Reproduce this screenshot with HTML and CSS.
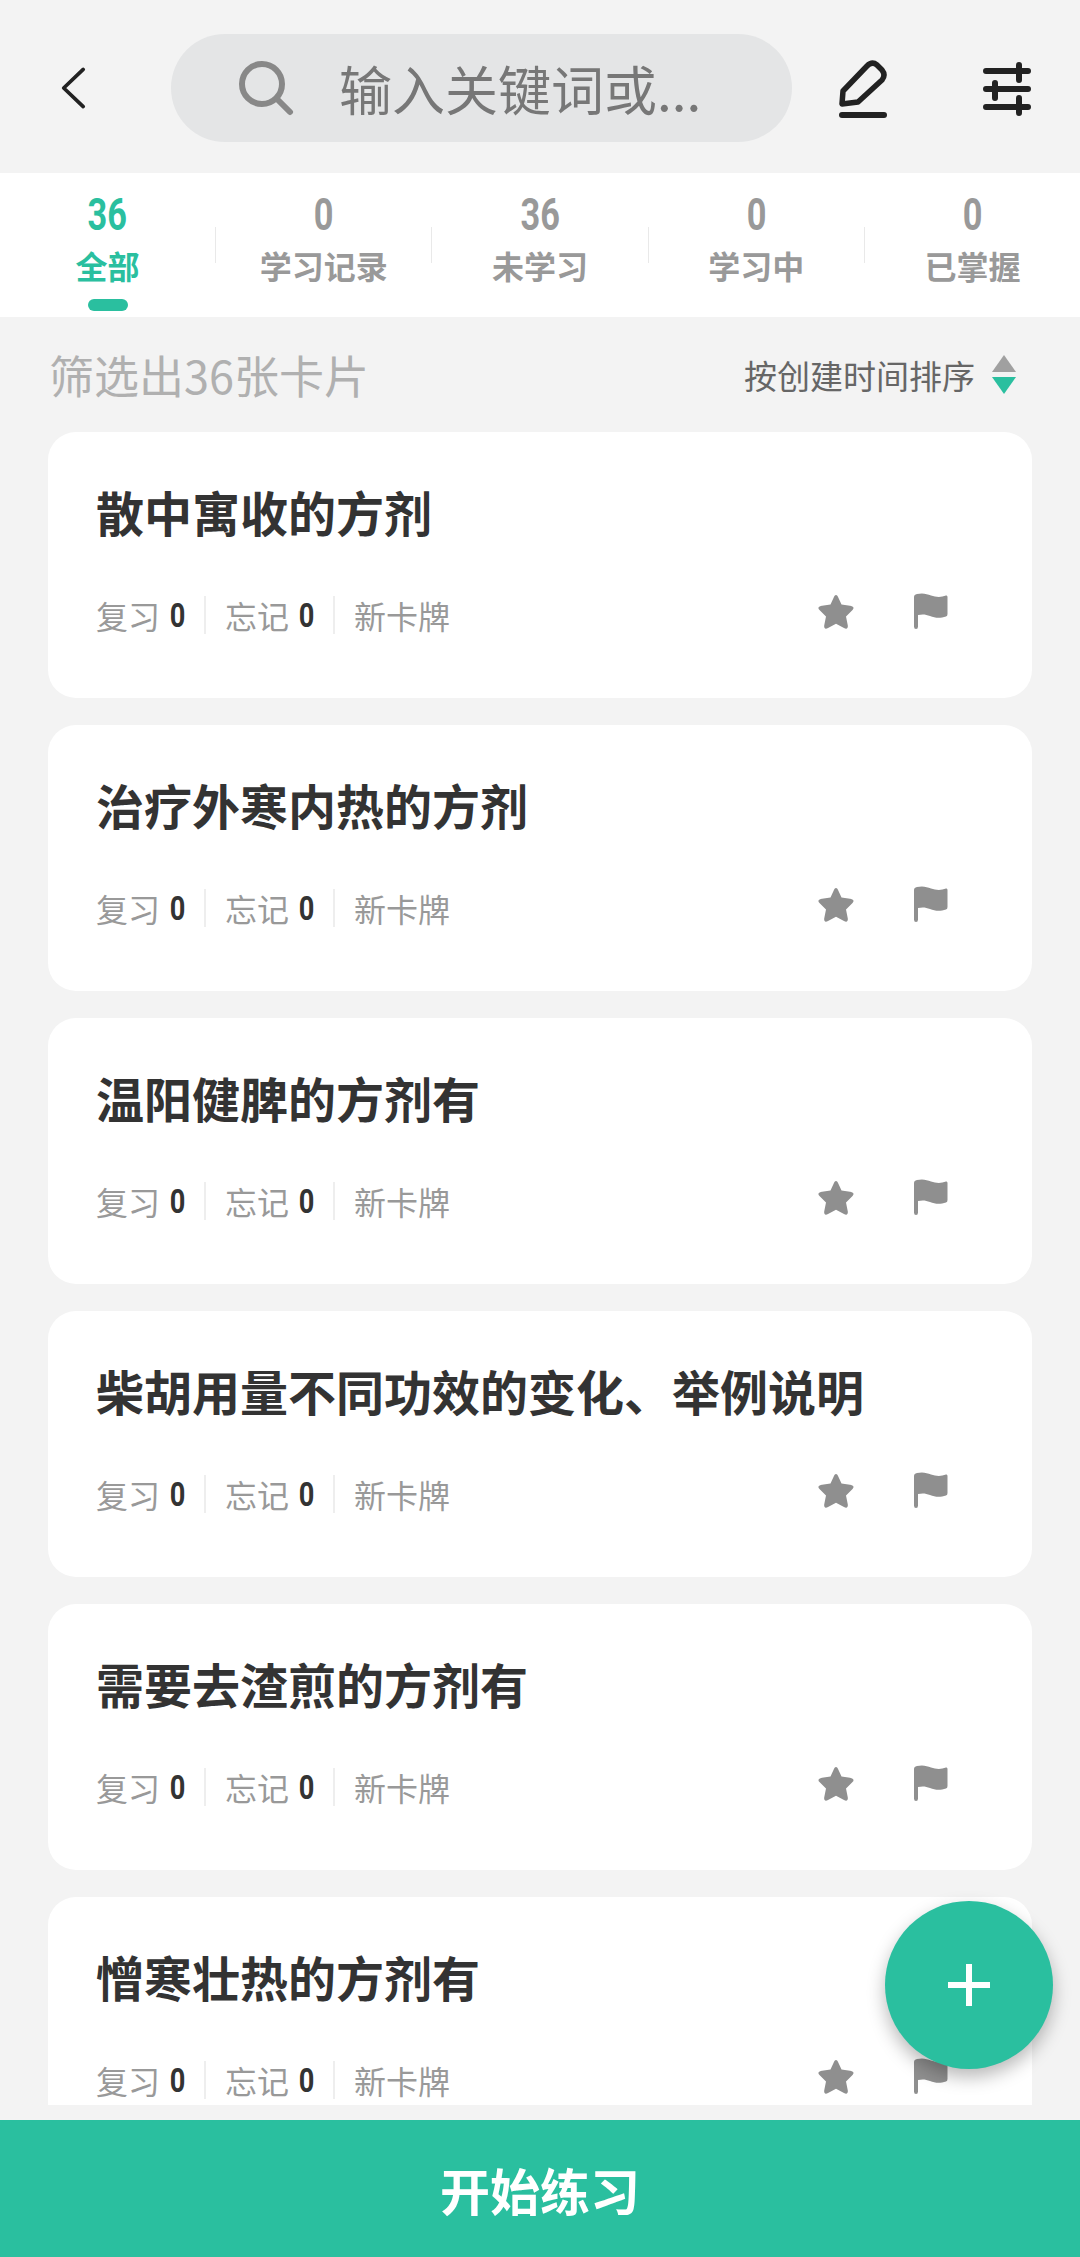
FILE: index.html
```html
<!DOCTYPE html>
<html lang="zh-CN">
<head>
    <meta charset="UTF-8">
    <meta name="viewport" content="width=device-width, initial-scale=1.0">
    <title>卡片列表</title>
    <link rel="stylesheet" href="styles.css">
</head>
<body>
    <div class="page">
        <header class="topbar">
            <svg class="icon-back" viewBox="0 0 28 46"><path d="M25 3 L4 23 L25 43" /></svg>
            <div class="search">
                <svg class="icon-search" viewBox="0 0 56 56"><circle cx="24" cy="24" r="20" /><path d="M39 39 L52 52" /></svg>
                <span class="search-text">输入关键词或...</span>
            </div>
            <svg class="icon-pencil" viewBox="0 0 48 58"><path d="M3 44 L4 31 L28 6 Q33 1 38 5 L43 10 Q47 15 43 20 L19 42 Z" /><path class="thick" d="M3 55 H45" /></svg>
            <svg class="icon-sliders" viewBox="0 0 48 54"><path d="M3 9 H45 M36 3 V18 M3 27 H45 M12 21 V36 M3 45 H45 M36 36 V51" /></svg>
        </header>

        <nav class="tabs">
            <div class="tab active"><span class="tab-num">36</span><span class="tab-label">全部</span><i class="tab-bar"></i></div>
            <i class="tab-sep"></i>
            <div class="tab"><span class="tab-num">0</span><span class="tab-label">学习记录</span></div>
            <i class="tab-sep"></i>
            <div class="tab"><span class="tab-num">36</span><span class="tab-label">未学习</span></div>
            <i class="tab-sep"></i>
            <div class="tab"><span class="tab-num">0</span><span class="tab-label">学习中</span></div>
            <i class="tab-sep"></i>
            <div class="tab"><span class="tab-num">0</span><span class="tab-label">已掌握</span></div>
        </nav>

        <div class="filter">
            <span class="filter-count">筛选出36张卡片</span>
            <div class="sort">
                <span>按创建时间排序</span>
                <div class="sort-arrows"><i class="arrow-up"></i><i class="arrow-down"></i></div>
            </div>
        </div>

        <main class="list">
            <section class="card">
                <h2>散中寓收的方剂</h2>
                <div class="meta">
                    <span class="meta-item">复习<b>0</b></span><span class="meta-item">忘记<b>0</b></span><span class="meta-new">新卡牌</span>
                    <div class="actions">
                        <svg class="icon-star" viewBox="0 0 38 38"><use href="#star" /></svg>
                        <svg class="icon-flag" viewBox="0 0 36 36"><use href="#flag" /></svg>
                    </div>
                </div>
            </section>
            <section class="card">
                <h2>治疗外寒内热的方剂</h2>
                <div class="meta">
                    <span class="meta-item">复习<b>0</b></span><span class="meta-item">忘记<b>0</b></span><span class="meta-new">新卡牌</span>
                    <div class="actions">
                        <svg class="icon-star" viewBox="0 0 38 38"><use href="#star" /></svg>
                        <svg class="icon-flag" viewBox="0 0 36 36"><use href="#flag" /></svg>
                    </div>
                </div>
            </section>
            <section class="card">
                <h2>温阳健脾的方剂有</h2>
                <div class="meta">
                    <span class="meta-item">复习<b>0</b></span><span class="meta-item">忘记<b>0</b></span><span class="meta-new">新卡牌</span>
                    <div class="actions">
                        <svg class="icon-star" viewBox="0 0 38 38"><use href="#star" /></svg>
                        <svg class="icon-flag" viewBox="0 0 36 36"><use href="#flag" /></svg>
                    </div>
                </div>
            </section>
            <section class="card">
                <h2>柴胡用量不同功效的变化、举例说明</h2>
                <div class="meta">
                    <span class="meta-item">复习<b>0</b></span><span class="meta-item">忘记<b>0</b></span><span class="meta-new">新卡牌</span>
                    <div class="actions">
                        <svg class="icon-star" viewBox="0 0 38 38"><use href="#star" /></svg>
                        <svg class="icon-flag" viewBox="0 0 36 36"><use href="#flag" /></svg>
                    </div>
                </div>
            </section>
            <section class="card">
                <h2>需要去渣煎的方剂有</h2>
                <div class="meta">
                    <span class="meta-item">复习<b>0</b></span><span class="meta-item">忘记<b>0</b></span><span class="meta-new">新卡牌</span>
                    <div class="actions">
                        <svg class="icon-star" viewBox="0 0 38 38"><use href="#star" /></svg>
                        <svg class="icon-flag" viewBox="0 0 36 36"><use href="#flag" /></svg>
                    </div>
                </div>
            </section>
            <section class="card">
                <h2>憎寒壮热的方剂有</h2>
                <div class="meta">
                    <span class="meta-item">复习<b>0</b></span><span class="meta-item">忘记<b>0</b></span><span class="meta-new">新卡牌</span>
                    <div class="actions">
                        <svg class="icon-star" viewBox="0 0 38 38"><use href="#star" /></svg>
                        <svg class="icon-flag" viewBox="0 0 36 36"><use href="#flag" /></svg>
                    </div>
                </div>
            </section>
        </main>

        <footer class="start">开始练习</footer>

        <div class="fab"><svg viewBox="0 0 42 42"><path d="M21 0 V42 M0 21 H42" /></svg></div>
    </div>

    <svg class="defs" width="0" height="0">
        <symbol id="star" viewBox="0 0 38 38">
            <path d="M19 3 C20 3 20.800 4 21.500 6 L24.500 12.500 L33 13.800 C36.500 14.500 37.500 16 35.500 18 L29 24.500 L30.800 33.500 C31.200 36.500 29.500 37.500 27 36 L19 31.800 L11 36 C8.500 37.500 6.800 36.500 7.200 33.500 L9 24.500 L2.500 18 C0.500 16 1.500 14.500 5 13.800 L13.500 12.500 L16.500 6 C17.200 4 18 3 19 3 Z" />
        </symbol>
        <symbol id="flag" viewBox="0 0 36 36">
            <path d="M2 4 Q2 1.500 5 1 C11 -0.500 15 1 19 2.500 C24 4.200 29 4.500 34 2.500 Q35.500 2 35.500 4 V21 Q35.500 23 34 23.500 C28 25.500 23 25 18 23 C14 21.500 11 21 6 22 V33.500 Q6 36 4 36 Q2 36 2 33.500 Z" />
        </symbol>
    </svg>
</body>
</html>
```

FILE: styles.css
```css
* {
    box-sizing: border-box;
}

body {
    margin: 0;
    background-color: #f3f3f3;
    font-family: "Noto Sans CJK SC", "Noto Sans", sans-serif;
}

.page {
    position: relative;
    display: flex;
    flex-direction: column;
    width: 1080px;
    height: 2257px;
    overflow: hidden;
}

.defs {
    position: absolute;
}

/* barra superior */
.topbar {
    display: flex;
    align-items: center;
    height: 173px;
    padding: 4px 48px 0 60px;
    flex-shrink: 0;
}

.icon-back {
    width: 26px;
    height: 46px;
    margin-top: -2px;
    fill: none;
    stroke: #222;
    stroke-width: 4;
    stroke-linecap: round;
    stroke-linejoin: round;
}

.search {
    display: flex;
    align-items: center;
    width: 621px;
    height: 108px;
    margin-left: 85px;
    margin-top: -2px;
    padding-left: 67px;
    border-radius: 54px;
    background-color: #e4e5e6;
}

.icon-search {
    width: 56px;
    height: 56px;
    fill: none;
    stroke: #888;
    stroke-width: 6;
    stroke-linecap: round;
}

.search-text {
    margin-left: 45px;
    font-size: 53px;
    line-height: 64px;
    font-weight: 400;
    color: #777;
}

.icon-pencil {
    width: 48px;
    height: 58px;
    margin-left: 47px;
    fill: none;
    stroke: #222;
    stroke-width: 5.5;
    stroke-linejoin: round;
    stroke-linecap: round;
}

.icon-pencil .thick {
    stroke-width: 6;
}

.icon-sliders {
    width: 48px;
    height: 54px;
    margin-left: 96px;
    fill: none;
    stroke: #222;
    stroke-width: 6;
    stroke-linecap: round;
}

/* abas */
.tabs {
    display: flex;
    height: 144px;
    background-color: #fff;
    flex-shrink: 0;
}

.tab {
    display: flex;
    flex-direction: column;
    align-items: center;
    flex: 1;
    padding-top: 20px;
    color: #999;
}

.tab-num {
    font-family: Roboto, sans-serif;
    font-size: 44px;
    line-height: 44px;
    font-weight: 700;
    transform: scaleX(0.78);
}

.tab-label {
    margin-top: 10px;
    font-size: 32px;
    line-height: 36px;
    font-weight: 700;
}

.tab-bar {
    width: 40px;
    height: 12px;
    margin-top: 16px;
    border-radius: 6px;
    background-color: #2abf9f;
}

.tab.active {
    color: #2abf9f;
}

.tab-sep {
    align-self: center;
    width: 1px;
    height: 36px;
    background-color: #e9e9e9;
}

/* filtro */
.filter {
    display: flex;
    align-items: center;
    justify-content: space-between;
    height: 115px;
    padding: 0 64px 0 49px;
    flex-shrink: 0;
}

.filter-count {
    font-size: 45px;
    font-weight: 400;
    color: #b0b0b0;
}

.sort {
    display: flex;
    align-items: center;
    gap: 17px;
    font-size: 33px;
    font-weight: 400;
    color: #666;
}

.sort-arrows {
    display: flex;
    flex-direction: column;
    gap: 5px;
}

.arrow-up,
.arrow-down {
    width: 0;
    height: 0;
    border-left: 12px solid transparent;
    border-right: 12px solid transparent;
}

.arrow-up {
    border-bottom: 17px solid #a0a0a0;
}

.arrow-down {
    border-top: 17px solid #2abf9f;
}

/* cartoes */
.list {
    display: flex;
    flex-direction: column;
    gap: 27px;
    height: 1673px;
    margin: 0 48px;
    overflow: hidden;
    flex-shrink: 0;
}

.card {
    height: 266px;
    padding: 47px 48px 0;
    border-radius: 28px;
    background-color: #fff;
    flex-shrink: 0;
}

.card h2 {
    margin: 0;
    font-size: 48px;
    line-height: 64px;
    font-weight: 700;
    color: #333;
}

.meta {
    display: flex;
    align-items: center;
    height: 40px;
    margin-top: 52px;
    font-size: 32px;
    font-weight: 400;
    color: #999;
}

.meta-item {
    display: flex;
    align-items: center;
    height: 38px;
    margin-right: 19px;
    padding-right: 19px;
    border-right: 2px solid #eee;
}

.meta-item b {
    width: 17px;
    margin-left: 8px;
    font-family: Roboto, sans-serif;
    font-size: 34px;
    font-weight: 700;
    color: #333;
    text-align: center;
    transform: scaleX(0.8);
}

.actions {
    display: flex;
    align-items: center;
    gap: 57px;
    margin-left: auto;
    margin-top: -8px;
    padding-right: 36px;
}

.icon-star {
    width: 38px;
    height: 38px;
    fill: #8f8f8f;
}

.icon-flag {
    width: 36px;
    height: 36px;
    fill: #8f8f8f;
}

/* rodape */
.start {
    display: flex;
    align-items: center;
    justify-content: center;
    height: 137px;
    margin-top: 15px;
    flex-shrink: 0;
    background-color: #2abf9f;
    font-size: 50px;
    font-weight: 700;
    color: #fff;
}

/* botao flutuante */
.fab {
    position: absolute;
    left: 885px;
    top: 1901px;
    display: flex;
    align-items: center;
    justify-content: center;
    width: 168px;
    height: 168px;
    border-radius: 50%;
    background-color: #2abf9f;
    box-shadow: 0 8px 18px rgba(0, 0, 0, 0.28);
}

.fab svg {
    width: 42px;
    height: 42px;
    fill: none;
    stroke: #fff;
    stroke-width: 6;
}
```
